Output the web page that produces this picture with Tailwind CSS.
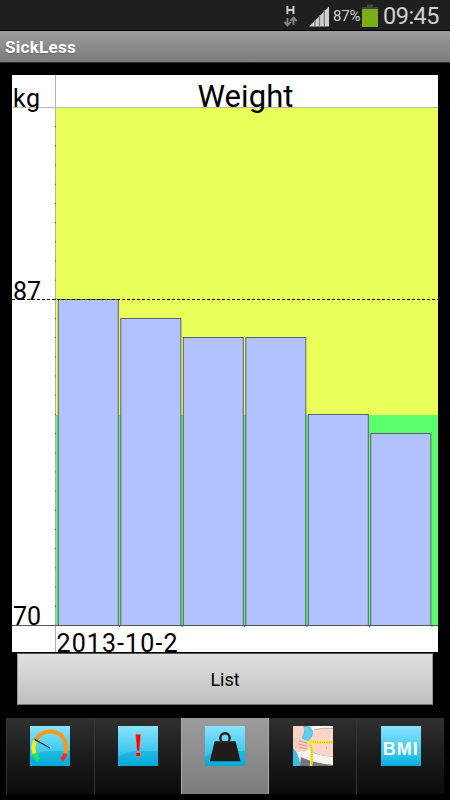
<!DOCTYPE html>
<html lang="en">
  <head>
    <meta charset="UTF-8" />
    <meta name="viewport" content="width=device-width, initial-scale=1.0" />
    <title>SickLess</title>
    <script src="https://cdn.jsdelivr.net/npm/@tailwindcss/browser@4"></script>
  </head>
  <body class="bg-black">
    <div class="w-[450px] h-[800px] bg-black overflow-hidden flex flex-col font-[Roboto,sans-serif]">
      <!-- Status bar -->
      <div class="h-[30px] shrink-0 bg-[#1f1f1f] flex items-start justify-end text-[#d0d0d0]">
        <svg class="w-4 h-[30px] mr-[9px]" viewBox="0 0 16 30">
          <path d="M4.400 6v8M10.400 6v8M4.400 10h6" fill="none" stroke="#d0d0d0" stroke-width="2" />
          <path d="M4.500 18v7M1.400 22l3.100 3.400L7.600 22M10.500 25v-7M7.500 21l3-3.400 3.100 3.400" fill="none" stroke="#858585" stroke-width="1.900" />
        </svg>
        <svg class="w-[22px] h-[30px] mr-[3px]" viewBox="0 0 22 30">
          <path d="M1 26.500L21 6.500v20z" fill="#d0d0d0" />
          <path d="M7 20v7M11.500 15v12M16.300 10v17" stroke="#777" stroke-width="1.300" />
        </svg>
        <span class="w-[28px] text-[15px] leading-[33px] tracking-[-0.2px] whitespace-nowrap">87%</span>
        <svg class="w-4 h-[30px] ml-[1px] mr-[5px]" viewBox="0 0 16 30">
          <path d="M5 4.500h6V7h5v2H0V7h5z" fill="#444" />
          <path d="M0 9h16v18H0z" fill="#7aad18" />
        </svg>
        <span class="w-[67px] text-[23.5px] leading-[32px] tracking-[-0.5px] whitespace-nowrap">09:45</span>
      </div>

      <!-- Title bar -->
      <div class="h-[33px] shrink-0 border-t border-b border-t-black border-b-[#333] bg-linear-to-b from-[#9c9c9c] to-[#7b7b7b] pl-[5px] text-white text-[17px] tracking-[0.3px] font-bold leading-[33px] text-shadow-sm">
        SickLess
      </div>

      <!-- Weight chart -->
      <svg class="w-[426px] h-[577px] shrink-0 mt-3 ml-3 overflow-visible" viewBox="12 75 426 577">
        <rect x="12" y="75" width="426" height="577" fill="#fff" />
        <rect x="56" y="108" width="382" height="307" fill="#e9ff5a" />
        <rect x="56" y="415" width="382" height="211" fill="#5aff6b" />
        <path d="M12 107.500h426" stroke="#b9b9a8" />
        <path d="M55.500 75v577" stroke="#b0b0b0" />
        <!-- one tick per kilogram -->
        <path d="M55.500 126.200v499" stroke="#444" stroke-dasharray="1 18.180" />
        <g fill="#b2c2ff" stroke="#5c6068">
          <rect x="58.300" y="299.500" width="60" height="326" />
          <rect x="120.800" y="318.500" width="60" height="307" />
          <rect x="183.300" y="337.500" width="60" height="288" />
          <rect x="245.800" y="337.500" width="60" height="288" />
          <rect x="308.300" y="414.500" width="60" height="211" />
          <rect x="370.800" y="433.500" width="60" height="192" />
        </g>
        <path d="M12 299.500h426" stroke="#111" stroke-dasharray="3 2" />
        <path d="M12 625.500h426M119.500 626v1M182 626v1M244.500 626v1M307 626v1M369.500 626v1M432 626v1" stroke="#555" />
        <g fill="#000" font-family="Roboto, sans-serif" font-size="25">
          <text x="13" y="107" textLength="27">kg</text>
          <text x="13" y="299.500" textLength="28">87</text>
          <text x="13" y="625" textLength="28">70</text>
          <text x="56.500" y="651.500" textLength="121">2013-10-2</text>
          <text x="197.500" y="107" font-size="31" textLength="96">Weight</text>
        </g>
      </svg>

      <!-- List button -->
      <button class="w-[416px] h-[52px] shrink-0 mt-[1px] ml-[17px] border border-t-[#555] border-x-[#999] border-b-[#777] bg-linear-to-b from-[#e0e0e0] to-[#c0c0c0] text-black text-[18px] font-normal leading-[52px]">
        List
      </button>

      <!-- Bottom tabs -->
      <div class="h-[76px] shrink-0 mt-[13px] mx-[6px] grid grid-cols-5">
        <div class="flex justify-center pt-2 bg-linear-to-b from-[#303030] via-[#1c1c1c] to-[#0b0b0b] border-l border-[#333]">
          <svg class="w-10 h-10" viewBox="0 0 40 40">
            <defs>
              <linearGradient id="sky" x2="0" y2="1">
                <stop stop-color="#8ae3ff" />
                <stop offset=".65" stop-color="#3cc8ec" />
                <stop offset="1" stop-color="#08acdd" />
              </linearGradient>
            </defs>
            <rect width="40" height="40" fill="url(#sky)" />
            <path d="M0 31Q9 25 20 25h20v15H0z" fill="#00a6d8" opacity=".45" />
            <g fill="none" stroke-width="4">
              <path d="M8.500 33.800Q5.500 31 4.600 27.500" stroke="#1cef34" />
              <path d="M4.600 27.500Q1.800 20 6 13.500" stroke="#f2f21b" />
              <path d="M6 13.500C14.500 1 31 4 35 15.500Q37 21.500 35.500 27.500" stroke="#ff9819" />
              <path d="M35.500 27.500Q34.500 31.500 31.500 34" stroke="#fc2c20" />
            </g>
            <path d="M4.500 12.800L20 22 5.500 14.500z" fill="#111" stroke="#111" stroke-width=".5" />
          </svg>
        </div>
        <div class="flex justify-center pt-2 bg-linear-to-b from-[#303030] via-[#1c1c1c] to-[#0b0b0b] border-l border-[#333]">
          <svg class="w-10 h-10" viewBox="0 0 40 40">
            <rect width="40" height="40" fill="url(#sky)" />
            <path d="M0 31Q9 25 20 25h20v15H0z" fill="#00a6d8" opacity=".45" />
            <path d="M17.500 8.200h5.200l-1.200 16.800h-2.600zM17.800 26.500h4.600v4h-4.600z" fill="#f00" stroke="#d9a5ac" stroke-width=".5" />
          </svg>
        </div>
        <div class="flex justify-center pt-2 bg-linear-to-b from-[#9c9c9c] to-[#7d7d7d] border-x border-[#aaa]">
          <svg class="w-10 h-10" viewBox="0 0 40 40">
            <rect width="40" height="40" fill="url(#sky)" />
            <path d="M0 31Q9 25 20 25h20v15H0z" fill="#00a6d8" opacity=".45" />
            <circle cx="20" cy="12" r="4.700" fill="none" stroke="#211b19" stroke-width="2.400" />
            <path d="M9.700 15.300h21l4.800 20H4.800z" fill="#211b19" />
          </svg>
        </div>
        <div class="flex justify-center pt-2 bg-linear-to-b from-[#303030] via-[#1c1c1c] to-[#0b0b0b]">
          <svg class="w-10 h-10" viewBox="0 0 40 40">
            <rect width="40" height="40" fill="#fff" />
            <path d="M0 0h20L9 25 0 28z" fill="#f8d4c7" />
            <path d="M0 22Q5 26 8 40H0z" fill="#39bce0" />
            <path d="M21 4Q30 1 40 2.500V31Q29 31 18 25L16 14z" fill="#fbd5c9" />
            <path d="M21 4Q30 1 40 2.500M40 31Q27 31 18 25" fill="none" stroke="#888" stroke-width=".6" />
            <path d="M8 28Q20 36 40 38v2H7z" fill="#777" />
            <path d="M9 24Q20 29 40 31v8Q20 37 8 31z" fill="#f4f4f1" />
            <path d="M13 0Q22 2 19 10L15 15 9 12Q13 6 11 0z" fill="#5dd0ec" stroke="#559aaa" stroke-width=".5" />
            <path d="M0 12Q7 13 16 15L18 22 11 26 1 22z" fill="#f7cbbd" />
            <path d="M6 15l8 2M5 18l9 2M6 21l8 2" stroke="#a9877d" stroke-width=".6" />
            <path d="M16 15.500Q29 17 40 16M17 14Q20 25 18 40" fill="none" stroke="#f0e92a" stroke-width="2.700" />
            <path d="M20 16Q30 17 40 16M18 19Q19.500 30 18.500 39" fill="none" stroke="#968b31" stroke-width="1.200" stroke-dasharray=".5 1.800" />
            <path d="M33.500 21v1.500" stroke="#b98d80" stroke-width=".7" />
          </svg>
        </div>
        <div class="flex justify-center pt-2 bg-linear-to-b from-[#303030] via-[#1c1c1c] to-[#0b0b0b] border-l border-[#333]">
          <svg class="w-10 h-10" viewBox="0 0 40 40">
            <rect width="40" height="40" fill="url(#sky)" />
            <text x="1.800" y="28.500" textLength="35" fill="#fff" font-family="Liberation Sans, sans-serif" font-weight="700" font-size="18">BMI</text>
          </svg>
        </div>
      </div>
    </div>
  </body>
</html>
